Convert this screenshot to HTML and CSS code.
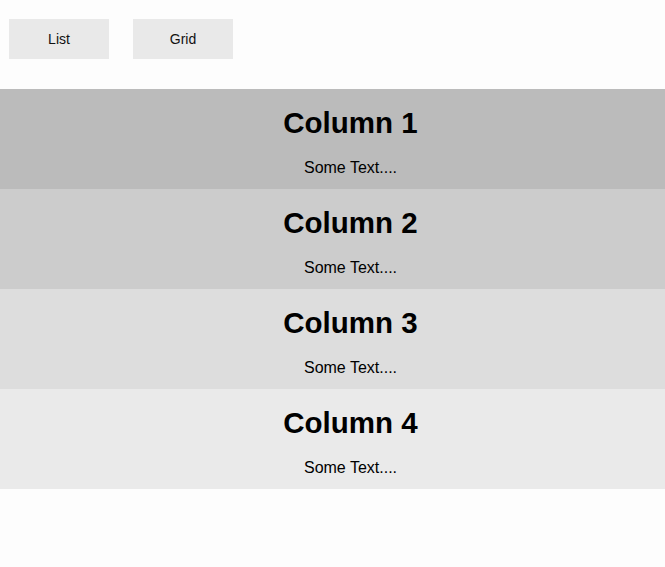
FILE: index.html
```html
<!DOCTYPE html>
<html>
<head>
<meta charset="utf-8">
<link rel="stylesheet" href="styles.css">
</head>
<body>
<div class="toolbar">
  <button class="btn">List</button>
  <button class="btn">Grid</button>
</div>
<div class="rows">
  <div class="column c1"><h2>Column 1</h2><p>Some Text....</p></div>
  <div class="column c2"><h2>Column 2</h2><p>Some Text....</p></div>
  <div class="column c3"><h2>Column 3</h2><p>Some Text....</p></div>
  <div class="column c4"><h2>Column 4</h2><p>Some Text....</p></div>
</div>
</body>
</html>
```
FILE: styles.css
```css
html, body {
  margin: 0;
  padding: 0;
  background: #fdfdfd;
  font-family: "Liberation Sans", Arial, sans-serif;
  color: #000;
}
.toolbar {
  display: flex;
  gap: 24px;
  padding: 19px 0 0 9px;
  margin-bottom: 30px;
}
.btn {
  width: 100px;
  height: 40px;
  border: none;
  background: #e9e9e9;
  font-family: "Liberation Sans", Arial, sans-serif;
  font-size: 14px;
  color: #111;
  padding: 0;
}
.column {
  box-sizing: border-box;
  height: 100px;
  padding: 17px 0 0 36px;
  text-align: center;
}
.column h2 {
  margin: 0;
  font-size: 29.5px;
  font-weight: bold;
}
.column p {
  margin: 19px 0 0;
  font-size: 16px;
}
.c1 { background: #bbbbbb; }
.c2 { background: #cccccc; }
.c3 { background: #dddddd; }
.c4 { background: #eaeaea; }
```
